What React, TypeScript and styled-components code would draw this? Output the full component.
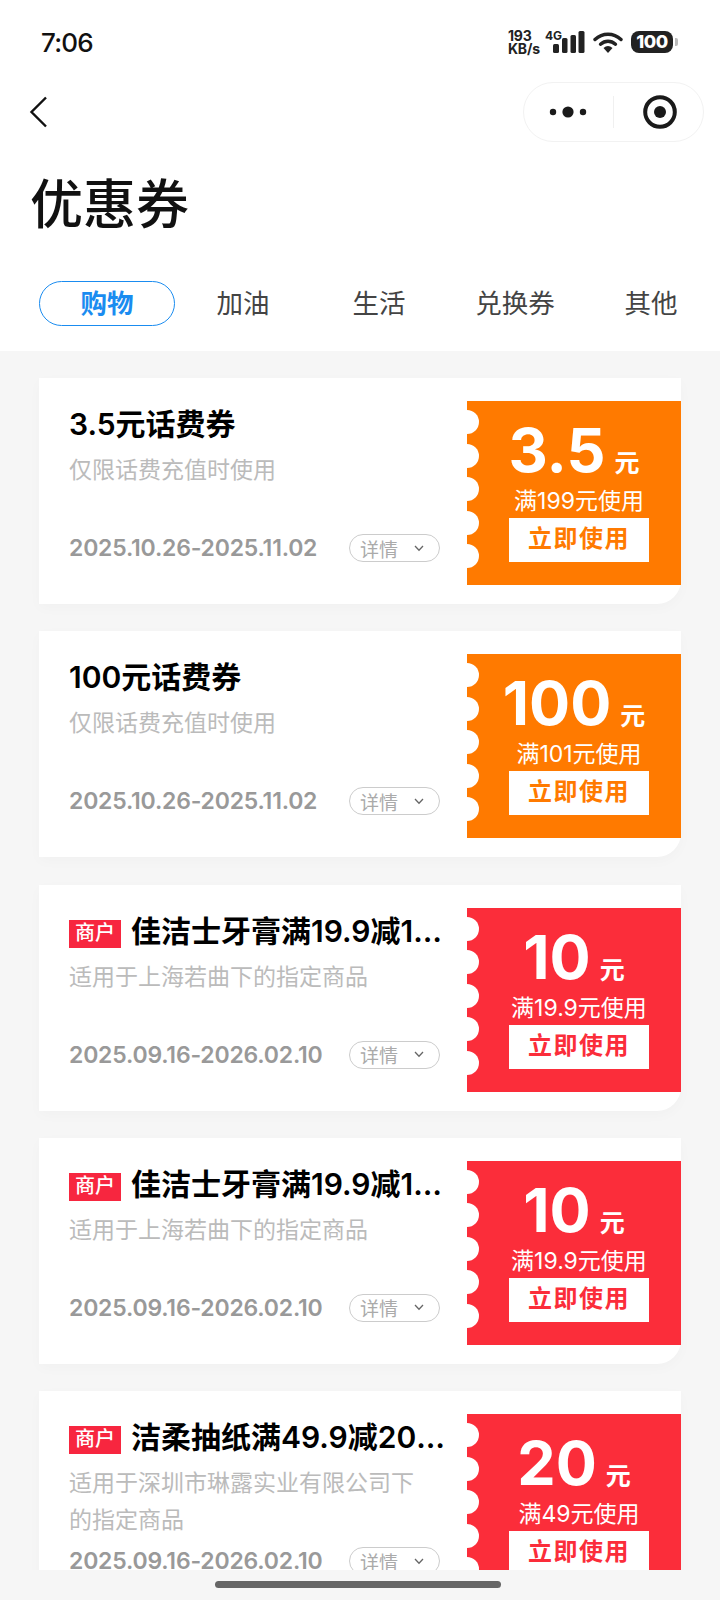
import React from "react";
import styled, { createGlobalStyle } from "styled-components";

const GlobalStyle = createGlobalStyle`
  html, body {
    margin: 0;
    padding: 0;
    background: #f6f6f6;
  }
  * {
    box-sizing: border-box;
  }
`;

const FONT = `Inter, "Noto Sans CJK SC", sans-serif`;
const ORANGE = "#ff7a00";
const RED = "#fb2d3a";

interface Coupon {
  merchant?: boolean;
  title: string;
  desc: string;
  date: string;
  amount: string;
  rule: string;
  color: string;
}

const coupons: Coupon[] = [
  {
    title: "3.5元话费券",
    desc: "仅限话费充值时使用",
    date: "2025.10.26-2025.11.02",
    amount: "3.5",
    rule: "满199元使用",
    color: ORANGE,
  },
  {
    title: "100元话费券",
    desc: "仅限话费充值时使用",
    date: "2025.10.26-2025.11.02",
    amount: "100",
    rule: "满101元使用",
    color: ORANGE,
  },
  {
    merchant: true,
    title: "佳洁士牙膏满19.9减10元",
    desc: "适用于上海若曲下的指定商品",
    date: "2025.09.16-2026.02.10",
    amount: "10",
    rule: "满19.9元使用",
    color: RED,
  },
  {
    merchant: true,
    title: "佳洁士牙膏满19.9减10元",
    desc: "适用于上海若曲下的指定商品",
    date: "2025.09.16-2026.02.10",
    amount: "10",
    rule: "满19.9元使用",
    color: RED,
  },
  {
    merchant: true,
    title: "洁柔抽纸满49.9减20元券",
    desc: "适用于深圳市琳露实业有限公司下的指定商品",
    date: "2025.09.16-2026.02.10",
    amount: "20",
    rule: "满49元使用",
    color: RED,
  },
];

const tabs = ["购物", "加油", "生活", "兑换券", "其他"];

const App: React.FC = () => {
  return (
    <Page>
      <GlobalStyle />
      <Header>
        <StatusBar>
          <Time>7:06</Time>
          <StatusIcons>
            <Speed>
              <span>193</span>
              <span>KB/s</span>
            </Speed>
            <Signal>
              <NetLabel>4G</NetLabel>
              <svg width="32" height="22" viewBox="0 0 32 22">
                <rect x="0" y="13" width="6" height="9" rx="1.5" fill="#222" />
                <rect x="9" y="7" width="5.5" height="15" rx="1.5" fill="#222" />
                <rect x="17.5" y="4" width="5.5" height="18" rx="1.5" fill="#222" />
                <rect x="25.5" y="0" width="6" height="22" rx="1.5" fill="#222" />
              </svg>
            </Signal>
            <svg width="30" height="22" viewBox="0 0 30 22">
              <path
                d="M2 8.5C9.5 1.5 20.5 1.5 28 8.5"
                fill="none"
                stroke="#222"
                strokeWidth="3.4"
                strokeLinecap="round"
              />
              <path
                d="M7.5 13.2C12 9.2 18 9.2 22.5 13.2"
                fill="none"
                stroke="#222"
                strokeWidth="3.4"
                strokeLinecap="round"
              />
              <path d="M10.5 17 Q15 13 19.5 17 L15 22 Z" fill="#222" />
            </svg>
            <Battery>
              <BatteryBody>100</BatteryBody>
              <BatteryCap />
            </Battery>
          </StatusIcons>
        </StatusBar>

        <NavBar>
          <svg width="20" height="32" viewBox="0 0 20 32">
            <polyline
              points="17,1.5 2.5,16 17,30.5"
              fill="none"
              stroke="#111"
              strokeWidth="2.4"
            />
          </svg>
          <Capsule>
            <CapsuleSlot>
              <svg width="44" height="12" viewBox="0 0 44 12">
                <circle cx="6" cy="6" r="3.2" fill="#1a1a1a" />
                <circle cx="21" cy="6" r="5.6" fill="#1a1a1a" />
                <circle cx="36" cy="6" r="3.2" fill="#1a1a1a" />
              </svg>
            </CapsuleSlot>
            <CapsuleDivider />
            <CapsuleSlot>
              <svg width="36" height="36" viewBox="0 0 36 36">
                <circle cx="19" cy="18" r="14.8" fill="none" stroke="#1a1a1a" strokeWidth="4" />
                <circle cx="19" cy="18" r="6" fill="#1a1a1a" />
              </svg>
            </CapsuleSlot>
          </Capsule>
        </NavBar>

        <PageTitle>优惠券</PageTitle>

        <TabRow>
          {tabs.map((tab, i) => (
            <Tab key={tab} $active={i === 0}>
              {tab}
            </Tab>
          ))}
        </TabRow>
      </Header>

      <CouponList>
        {coupons.map((coupon, i) => (
          <Card key={i}>
            <CardBody>
              <TitleRow>
                {coupon.merchant && <MerchantTag>商户</MerchantTag>}
                <CardTitle>{coupon.title}</CardTitle>
              </TitleRow>
              <CardDesc>{coupon.desc}</CardDesc>
              <DateRow>
                <DateText>{coupon.date}</DateText>
                <DetailPill>
                  详情
                  <svg width="10" height="7" viewBox="0 0 10 7">
                    <polyline
                      points="1,1 5,5.2 9,1"
                      fill="none"
                      stroke="#666"
                      strokeWidth="1.3"
                    />
                  </svg>
                </DetailPill>
              </DateRow>
            </CardBody>
            <Stub $color={coupon.color}>
              <Notches>
                {[0, 1, 2, 3, 4].map((n) => (
                  <Notch key={n} />
                ))}
              </Notches>
              <AmountRow>
                <Amount>{coupon.amount}</Amount>
                <Unit>元</Unit>
              </AmountRow>
              <Rule>{coupon.rule}</Rule>
              <UseButton $color={coupon.color}>立即使用</UseButton>
            </Stub>
          </Card>
        ))}
      </CouponList>

      <BottomBar>
        <HomeIndicator />
      </BottomBar>
    </Page>
  );
};

export default App;

const Page = styled.div`
  width: 720px;
  height: 1600px;
  display: flex;
  flex-direction: column;
  overflow: hidden;
  background: #f6f6f6;
  font-family: ${FONT};
`;

const Header = styled.div`
  background: #fff;
  height: 351px;
  flex-shrink: 0;
`;

const StatusBar = styled.div`
  height: 82px;
  padding: 2px 42px 0 41px;
  display: flex;
  align-items: center;
  justify-content: space-between;
`;

const Time = styled.div`
  font-size: 26px;
  font-weight: 500;
  letter-spacing: -0.8px;
  color: #111;
`;

const StatusIcons = styled.div`
  display: flex;
  align-items: center;
  height: 22px;
  gap: 8px;
`;

const Speed = styled.div`
  display: flex;
  flex-direction: column;
  width: 34px;
  margin-right: -5px;
  font-size: 14px;
  font-weight: 700;
  line-height: 13px;
  letter-spacing: -0.2px;
  color: #222;
`;

const Signal = styled.div`
  display: flex;
  align-items: flex-start;
  position: relative;
  padding-left: 8px;
`;

const NetLabel = styled.span`
  position: absolute;
  left: 0;
  top: -1px;
  font-size: 12px;
  line-height: 12px;
  font-weight: 700;
  color: #222;
`;

const Battery = styled.div`
  display: flex;
  align-items: center;
  gap: 2px;
`;

const BatteryBody = styled.div`
  width: 42px;
  height: 22px;
  border-radius: 8px;
  background: #222;
  color: #fff;
  font-size: 18px;
  font-weight: 800;
  line-height: 22px;
  text-align: center;
  letter-spacing: -0.5px;
`;

const BatteryCap = styled.div`
  width: 3px;
  height: 8px;
  border-radius: 0 2px 2px 0;
  background: #bbb;
`;

const NavBar = styled.div`
  height: 60px;
  padding: 0 16px 0 29px;
  display: flex;
  align-items: center;
  justify-content: space-between;
`;

const Capsule = styled.div`
  width: 181px;
  height: 60px;
  border: 1px solid #f2f2f2;
  border-radius: 30px;
  display: flex;
  align-items: center;
`;

const CapsuleSlot = styled.div`
  flex: 1;
  display: flex;
  align-items: center;
  justify-content: center;
`;

const CapsuleDivider = styled.div`
  width: 1px;
  height: 32px;
  background: #f0f0f0;
`;

const PageTitle = styled.h1`
  margin: 28px 0 0 30px;
  font-size: 53px;
  line-height: 70px;
  font-weight: 500;
  color: #111;
`;

const TabRow = styled.div`
  margin-top: 41px;
  padding-left: 39px;
  display: flex;
`;

const Tab = styled.div<{ $active?: boolean }>`
  width: 136px;
  height: 45px;
  flex-shrink: 0;
  display: flex;
  align-items: center;
  justify-content: center;
  padding-bottom: 5px;
  border-radius: 23px;
  font-size: 26.5px;
  font-weight: ${({ $active }) => ($active ? 700 : 400)};
  color: ${({ $active }) => ($active ? "#1a8cf0" : "#444")};
  border: 1px solid ${({ $active }) => ($active ? "#1a8cf0" : "transparent")};
`;

const CouponList = styled.div`
  height: 1219px;
  flex-shrink: 0;
  overflow: hidden;
  padding: 27px 39px 0;
  display: flex;
  flex-direction: column;
  gap: 27.3px;
`;

const Card = styled.div`
  height: 226px;
  flex-shrink: 0;
  display: flex;
  background: #fff;
  border-radius: 0 0 24px 0;
  box-shadow: 0 4px 14px rgba(0, 0, 0, 0.025);
`;

const CardBody = styled.div`
  width: 428px;
  padding: 21px 14px 42px 30px;
  display: flex;
  flex-direction: column;
`;

const TitleRow = styled.div`
  display: flex;
  align-items: center;
  height: 46px;
  gap: 10px;
`;

const MerchantTag = styled.span`
  width: 52px;
  height: 28px;
  margin-top: 10px;
  flex-shrink: 0;
  background: #f7263f;
  color: #fff;
  font-size: 20px;
  line-height: 27px;
  font-weight: 500;
  text-align: center;
`;

const CardTitle = styled.div`
  min-width: 0;
  flex: 1;
  font-size: 30px;
  font-weight: 600;
  color: #000;
  white-space: nowrap;
  overflow: hidden;
  text-overflow: ellipsis;
`;

const CardDesc = styled.div`
  margin-top: 7px;
  max-width: 360px;
  font-size: 23px;
  line-height: 37px;
  color: #bbb;
`;

const DateRow = styled.div`
  margin-top: auto;
  margin-right: 13px;
  height: 28px;
  flex-shrink: 0;
  display: flex;
  align-items: center;
  justify-content: space-between;
`;

const DateText = styled.div`
  font-size: 23px;
  font-weight: 600;
  color: #999;
  white-space: nowrap;
  letter-spacing: -0.2px;
`;

const DetailPill = styled.div`
  width: 91px;
  height: 28px;
  flex-shrink: 0;
  border: 1px solid #ccc;
  border-radius: 14px;
  padding: 0 15px 0 10px;
  display: flex;
  align-items: center;
  justify-content: space-between;
  font-size: 19px;
  color: #aaa;
`;

const Stub = styled.div<{ $color: string }>`
  position: relative;
  width: 214px;
  height: 184px;
  margin-top: 23px;
  flex-shrink: 0;
  display: flex;
  flex-direction: column;
  align-items: center;
  background: ${({ $color }) => $color};
  color: #fff;
`;

const Notches = styled.div`
  position: absolute;
  left: -12px;
  top: 9px;
  display: flex;
  flex-direction: column;
  gap: 9.5px;
`;

const Notch = styled.div`
  width: 24px;
  height: 24px;
  border-radius: 50%;
  background: #fff;
`;

const AmountRow = styled.div`
  height: 72px;
  margin-top: 13px;
  display: flex;
  align-items: baseline;
  gap: 9px;
`;

const Amount = styled.div`
  font-size: 61px;
  line-height: 72px;
  font-weight: 700;
`;

const Unit = styled.div`
  font-size: 25px;
  font-weight: 700;
`;

const Rule = styled.div`
  margin-left: 10px;
  font-size: 23px;
  line-height: 30px;
  white-space: nowrap;
`;

const UseButton = styled.div<{ $color: string }>`
  width: 140px;
  height: 44px;
  margin: 2px 0 0 10px;
  background: #fff;
  color: ${({ $color }) => $color};
  font-size: 24px;
  font-weight: 700;
  line-height: 42px;
  text-align: center;
  letter-spacing: 1.5px;
`;

const BottomBar = styled.div`
  flex: 1;
  display: flex;
  justify-content: center;
  padding: 11px 4px 0 0;
`;

const HomeIndicator = styled.div`
  width: 286px;
  height: 7px;
  border-radius: 4px;
  background: #666;
`;
